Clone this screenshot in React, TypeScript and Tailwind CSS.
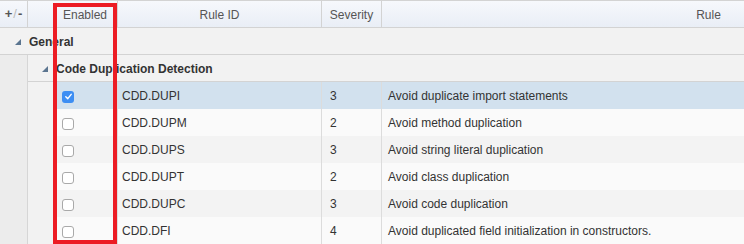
const rules = [
  { id: 'CDD.DUPI', severity: 3, text: 'Avoid duplicate import statements', enabled: true },
  { id: 'CDD.DUPM', severity: 2, text: 'Avoid method duplication', enabled: false },
  { id: 'CDD.DUPS', severity: 3, text: 'Avoid string literal duplication', enabled: false },
  { id: 'CDD.DUPT', severity: 2, text: 'Avoid class duplication', enabled: false },
  { id: 'CDD.DUPC', severity: 3, text: 'Avoid code duplication', enabled: false },
  { id: 'CDD.DFI', severity: 4, text: 'Avoid duplicated field initialization in constructors.', enabled: false },
];

function Expander() {
  return (
    <svg width="6" height="6" viewBox="0 0 6 6" className="shrink-0">
      <polygon points="0,6 6,6 6,0" fill="#5b7590" />
    </svg>
  );
}

function Checkbox({ checked }: { checked: boolean }) {
  if (checked) {
    return (
      <span className="flex h-[12px] w-[12px] items-center justify-center rounded-[3px] bg-[#3d8ef3]">
        <svg width="9" height="9" viewBox="0 0 10 10">
          <path d="M2 5.2 L4.2 7.4 L8 2.6" fill="none" stroke="#fff" strokeWidth="1.6" strokeLinecap="round" strokeLinejoin="round" />
        </svg>
      </span>
    );
  }
  return <span className="h-[12px] w-[12px] rounded-[3px] border border-[#a9a9a9] bg-white" />;
}

export default function App() {
  return (
    <div className="relative h-[244px] w-[744px] overflow-hidden bg-white font-['Liberation_Sans',Arial,sans-serif] text-[12px] text-[#333]">
      {/* header */}
      <div className="flex h-[28px] w-[1040px] border-y border-[#d3d3d3] bg-gradient-to-b from-[#f6f8fc] to-[#e9eef6] text-[#555]">
        <div className="flex w-[28px] items-center justify-center border-r border-[#d3d3d3] text-[13px] font-bold">
          +<span className="mx-[1px] font-normal text-[#bbb]">/</span>-
        </div>
        <div className="w-[25px]" />
        <div className="flex w-[64px] items-center justify-center pt-px">Enabled</div>
        <div className="flex w-[204px] items-center justify-center border-l border-[#d3d3d3] pt-px">Rule ID</div>
        <div className="flex w-[60px] items-center justify-center border-l border-[#d3d3d3] pt-px">Severity</div>
        <div className="flex w-[654px] items-center justify-center border-l border-[#d3d3d3] pt-px">Rule</div>
      </div>

      {/* General group */}
      <div className="flex h-[27px] items-center border-b border-[#d3d3d3] bg-[#f2f2f2] pl-[15px] pt-px font-bold">
        <Expander />
        <span className="ml-[8px]">General</span>
      </div>

      <div className="flex">
        <div className="w-[28px] shrink-0 border-r border-[#d6d6d6] bg-[#ececec]" />
        <div className="flex-1">
          {/* Code Duplication Detection group */}
          <div className="flex h-[27px] items-center border-b border-[#d3d3d3] bg-[#f2f2f2] pl-[14px] pt-px font-bold">
            <Expander />
            <span className="ml-[8px]">Code Duplication Detection</span>
          </div>

          <div className="flex">
            <div className="w-[25px] shrink-0 bg-[#f2f2f2]" />
            <div className="w-[1000px]">
              {rules.map((r, i) => (
                <div
                  key={r.id}
                  className={
                    'flex h-[27px] ' +
                    (i === 0 ? 'bg-[#d2e1ee]' : i % 2 === 1 ? 'bg-[#fafafa]' : 'bg-[#f3f3f3]')
                  }
                >
                  <div className="flex w-[64px] items-center pl-[9px] pt-[2px]">
                    <Checkbox checked={r.enabled} />
                  </div>
                  <div className="flex w-[204px] items-center border-l border-[#dcdcdc] pl-[4px] pt-px">{r.id}</div>
                  <div className="flex w-[60px] items-center border-l border-[#dcdcdc] pl-[8px] pt-px">{r.severity}</div>
                  <div className="flex flex-1 items-center border-l border-[#dcdcdc] pl-[6px] pt-px">{r.text}</div>
                </div>
              ))}
            </div>
          </div>
        </div>
      </div>

      {/* highlight box */}
      <div className="absolute left-[53px] top-[3px] h-[241px] w-[64px] border-4 border-[#ec1c24]" />
    </div>
  );
}
